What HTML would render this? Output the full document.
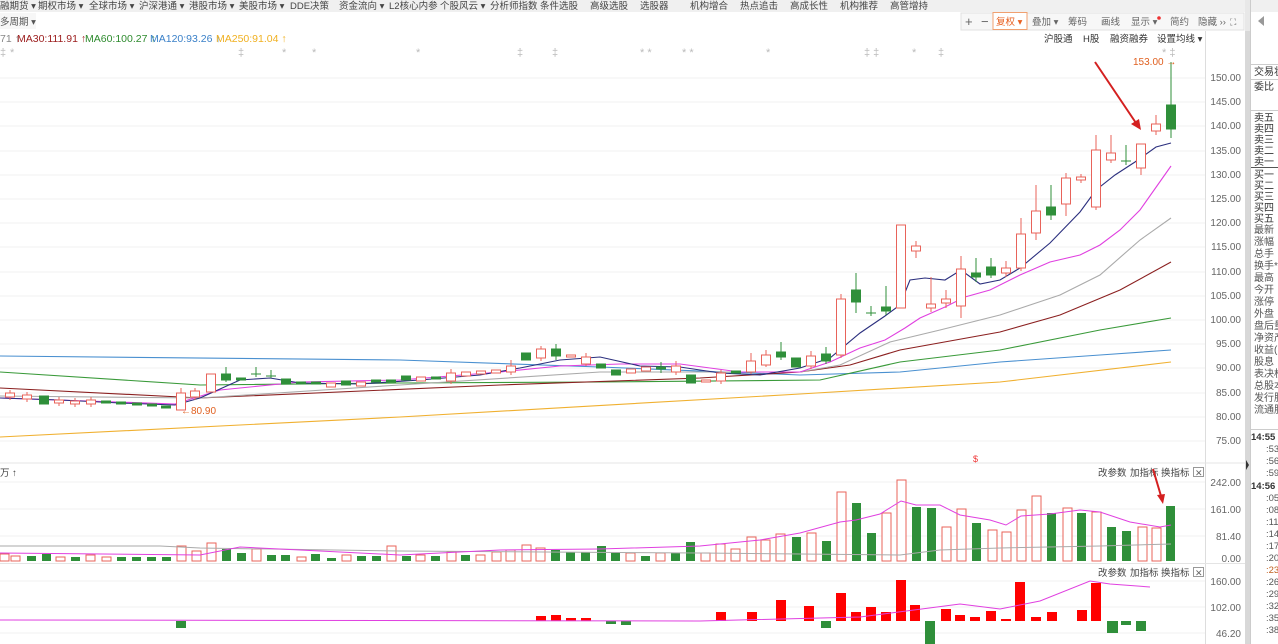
<!DOCTYPE html>
<html><head><meta charset="utf-8">
<style>
html,body{margin:0;padding:0;background:#fff;width:1278px;height:644px;overflow:hidden;font-family:"Liberation Sans","Noto Sans CJK SC",sans-serif;}
svg text{font-family:"Liberation Sans","Noto Sans CJK SC",sans-serif;}
</style></head><body>
<svg width="1278" height="644" viewBox="0 0 1278 644" xmlns="http://www.w3.org/2000/svg">
<rect x="0" y="0" width="1278" height="12" fill="#f0f0f0"/>
<g font-size="9.5" fill="#444">
<text x="0" y="9">融期货 ▾</text><text x="38" y="9">期权市场 ▾</text><text x="89" y="9">全球市场 ▾</text><text x="139" y="9">沪深港通 ▾</text><text x="189" y="9">港股市场 ▾</text><text x="239" y="9">美股市场 ▾</text><text x="290" y="9">DDE决策</text><text x="339" y="9">资金流向 ▾</text><text x="389" y="9">L2核心内参</text><text x="440" y="9">个股风云 ▾</text><text x="490" y="9">分析师指数</text><text x="540" y="9">条件选股</text><text x="590" y="9">高级选股</text><text x="640" y="9">选股器</text><text x="690" y="9">机构增合</text><text x="740" y="9">热点追击</text><text x="790" y="9">高成长性</text><text x="840" y="9">机构推荐</text><text x="890" y="9">高管增持</text>
</g>
<rect x="0" y="12" width="1245" height="19" fill="#fff"/>
<rect x="0" y="13" width="36" height="16" fill="#f7f7f7"/>
<text x="0" y="25" font-size="9.5" fill="#555">多周期 ▾</text>
<g font-size="9.5" fill="#666">
<rect x="961" y="13" width="283" height="17" fill="#f7f7f7" stroke="#e0e0e0"/>
<text x="965" y="26" font-size="13">+</text><text x="981" y="26" font-size="13">−</text>
<rect x="993" y="12.5" width="34" height="17" fill="#fff" stroke="#f0a070"/>
<text x="996" y="25" fill="#e86020">复权 ▾</text>
<text x="1032" y="25">叠加 ▾</text><text x="1068" y="25">筹码</text><text x="1101" y="25">画线</text><text x="1131" y="25">显示 ▾</text><circle cx="1159" cy="18" r="1.8" fill="#e33"/><text x="1170" y="25">简约</text><text x="1198" y="25">隐藏 ››</text><text x="1230" y="25" font-size="9">⛶</text>
</g>
<path d="M1264 16 L1258 21 L1264 26 Z" fill="#999"/>
<g font-size="10.5">
<text x="0" y="42" fill="#888">71 ↑</text>
<text x="17" y="42" fill="#9b1c1c">MA30:111.91 ↑</text>
<text x="85" y="42" fill="#2e8b2e">MA60:100.27 ↑</text>
<text x="150" y="42" fill="#3a80c8">MA120:93.26 ↑</text>
<text x="216" y="42" fill="#f0b020">MA250:91.04 ↑</text>
</g>
<g font-size="9.5" fill="#333"><text x="1044" y="42">沪股通</text><text x="1083" y="42">H股</text><text x="1110" y="42">融资融券</text><text x="1157" y="42">设置均线 ▾</text></g>
<g font-size="11" fill="#bbb"><text x="0" y="56">‡</text><text x="10" y="56">*</text><text x="238" y="56">‡</text><text x="282" y="56">*</text><text x="312" y="56">*</text><text x="416" y="56">*</text><text x="517" y="56">‡</text><text x="552" y="56">‡</text><text x="640" y="56">* *</text><text x="682" y="56">* *</text><text x="766" y="56">*</text><text x="864" y="56">‡ ‡</text><text x="912" y="56">*</text><text x="938" y="56">‡</text><text x="1162" y="56">* ‡</text></g>
<line x1="1205.5" y1="31" x2="1205.5" y2="644" stroke="#ddd"/>
<rect x="1245" y="31" width="5" height="613" fill="#d8d8d8"/>
<rect x="1245" y="0" width="5" height="31" fill="#e8e8e8"/>
<line x1="1250.5" y1="0" x2="1250.5" y2="644" stroke="#ccc"/>
<g stroke="#f0f0f0">
<line x1="0" y1="78" x2="1205" y2="78"/><line x1="0" y1="102" x2="1205" y2="102"/><line x1="0" y1="126" x2="1205" y2="126"/><line x1="0" y1="151" x2="1205" y2="151"/><line x1="0" y1="175" x2="1205" y2="175"/><line x1="0" y1="199" x2="1205" y2="199"/><line x1="0" y1="223" x2="1205" y2="223"/><line x1="0" y1="247" x2="1205" y2="247"/><line x1="0" y1="272" x2="1205" y2="272"/><line x1="0" y1="296" x2="1205" y2="296"/><line x1="0" y1="320" x2="1205" y2="320"/><line x1="0" y1="344" x2="1205" y2="344"/><line x1="0" y1="368" x2="1205" y2="368"/><line x1="0" y1="393" x2="1205" y2="393"/><line x1="0" y1="417" x2="1205" y2="417"/><line x1="0" y1="441" x2="1205" y2="441"/>
<line x1="0" y1="482" x2="1205" y2="482"/><line x1="0" y1="509" x2="1205" y2="509"/><line x1="0" y1="536" x2="1205" y2="536"/>
<line x1="0" y1="581" x2="1205" y2="581"/><line x1="0" y1="607" x2="1205" y2="607"/><line x1="0" y1="633" x2="1205" y2="633"/>
</g>
<line x1="0" y1="463" x2="1245" y2="463" stroke="#e4e4e4"/>
<line x1="0" y1="563.5" x2="1245" y2="563.5" stroke="#e4e4e4"/>
<g font-size="10" fill="#666" text-anchor="end">
<text x="1241" y="81">150.00</text><text x="1241" y="105">145.00</text><text x="1241" y="129">140.00</text><text x="1241" y="154">135.00</text><text x="1241" y="178">130.00</text><text x="1241" y="202">125.00</text><text x="1241" y="226">120.00</text><text x="1241" y="250">115.00</text><text x="1241" y="275">110.00</text><text x="1241" y="299">105.00</text><text x="1241" y="323">100.00</text><text x="1241" y="347">95.00</text><text x="1241" y="371">90.00</text><text x="1241" y="396">85.00</text><text x="1241" y="420">80.00</text><text x="1241" y="444">75.00</text>
<text x="1241" y="486">242.00</text><text x="1241" y="513">161.00</text><text x="1241" y="540">81.40</text><text x="1241" y="562">0.00</text>
<text x="1241" y="585">160.00</text><text x="1241" y="611">102.00</text><text x="1241" y="637">46.20</text>
</g>
<g fill="none" stroke-width="1.1">
<polyline stroke="#f0b030" points="0,437 400,417 800,394 1000,382 1171,362"/>
<polyline stroke="#4a90d0" points="0,356 400,360 600,367 800,375 900,372 1000,362 1100,355 1171,350"/>
<polyline stroke="#3a9a3a" points="0,372 200,385 400,383 600,382 820,380 900,362 1000,350 1100,330 1171,318"/>
<polyline stroke="#8b2020" points="0,388 200,398 500,385 700,378 800,372 850,365 900,350 1000,332 1060,315 1120,290 1171,262"/>
<polyline stroke="#aaa" points="0,396 200,398 400,385 600,372 800,372 840,365 890,342 940,330 1000,315 1060,295 1100,275 1140,240 1171,218"/>
<polyline stroke="#e040e0" points="0,398 175,404 220,390 300,382 400,380 500,372 560,366 620,364 680,364 740,372 800,372 830,362 860,348 885,340 905,328 920,318 945,307 965,297 990,290 1020,275 1050,262 1080,255 1100,245 1120,230 1140,210 1171,166"/>
<polyline stroke="#2b2f7e" points="0,398 60,400 120,403 175,405 200,398 240,380 270,378 300,383 360,384 420,380 480,375 520,368 560,360 600,357 640,366 680,367 720,373 760,375 800,368 830,358 860,333 885,316 900,305 910,280 925,278 945,280 961,270 980,284 1000,280 1020,268 1050,243 1080,212 1096,190 1115,175 1135,162 1156,147 1171,143"/>
</g>
<g stroke="#e8635a" fill="#fff">
<line x1="10" y1="390" x2="10" y2="400"/><rect x="5.5" y="393" width="9" height="4"/>
<line x1="27" y1="392" x2="27" y2="402"/><rect x="22.5" y="395" width="9" height="4"/>
<line x1="59" y1="397" x2="59" y2="406"/><rect x="54.5" y="400" width="9" height="3"/>
<line x1="75" y1="398" x2="75" y2="407"/><rect x="70.5" y="401" width="9" height="3"/>
<line x1="91" y1="397" x2="91" y2="407"/><rect x="86.5" y="400" width="9" height="4"/>
<line x1="181" y1="388" x2="181" y2="410"/><rect x="176.5" y="393" width="9" height="17"/>
<line x1="195" y1="388" x2="195" y2="400"/><rect x="190.5" y="391" width="9" height="6"/>
<rect x="206.5" y="374" width="9" height="18"/>
<rect x="326.5" y="383" width="9" height="4"/><rect x="356.5" y="382" width="9" height="4"/>
<rect x="416.5" y="377" width="9" height="4"/>
<line x1="451" y1="369" x2="451" y2="384"/><rect x="446.5" y="373" width="9" height="8"/>
<rect x="461.5" y="372" width="9" height="4"/><rect x="476.5" y="371" width="9" height="3"/><rect x="491.5" y="370" width="9" height="3"/>
<line x1="511" y1="360" x2="511" y2="375"/><rect x="506.5" y="366" width="9" height="6"/>
<line x1="541" y1="346" x2="541" y2="361"/><rect x="536.5" y="349" width="9" height="9"/>
<rect x="566.5" y="355" width="9" height="2"/>
<line x1="586" y1="353" x2="586" y2="366"/><rect x="581.5" y="357" width="9" height="7"/>
<rect x="626.5" y="369" width="9" height="4"/><rect x="641.5" y="367" width="9" height="4"/>
<line x1="676" y1="361" x2="676" y2="375"/><rect x="671.5" y="366" width="9" height="6"/>
<rect x="701.5" y="380" width="9" height="2"/>
<line x1="721" y1="370" x2="721" y2="384"/><rect x="716.5" y="373" width="9" height="8"/>
<line x1="751" y1="353" x2="751" y2="374"/><rect x="746.5" y="361" width="9" height="11"/>
<line x1="766" y1="350" x2="766" y2="367"/><rect x="761.5" y="355" width="9" height="10"/>
<line x1="811" y1="351" x2="811" y2="369"/><rect x="806.5" y="356" width="9" height="10"/>
<line x1="841" y1="294" x2="841" y2="358"/><rect x="836.5" y="299" width="9" height="56"/>
<rect x="896.5" y="225" width="9" height="83"/>
<line x1="916" y1="241" x2="916" y2="258"/><rect x="911.5" y="246" width="9" height="5"/>
<line x1="931" y1="277" x2="931" y2="312"/><rect x="926.5" y="304" width="9" height="4"/>
<line x1="946" y1="290" x2="946" y2="308"/><rect x="941.5" y="299" width="9" height="4"/>
<line x1="961" y1="256" x2="961" y2="318"/><rect x="956.5" y="269" width="9" height="37"/>
<line x1="1006" y1="261" x2="1006" y2="277"/><rect x="1001.5" y="268" width="9" height="5"/>
<line x1="1021" y1="218" x2="1021" y2="271"/><rect x="1016.5" y="234" width="9" height="34"/>
<line x1="1036" y1="185" x2="1036" y2="240"/><rect x="1031.5" y="211" width="9" height="22"/>
<line x1="1066" y1="173" x2="1066" y2="216"/><rect x="1061.5" y="178" width="9" height="26"/>
<line x1="1081" y1="174" x2="1081" y2="183"/><rect x="1076.5" y="177" width="9" height="3"/>
<line x1="1096" y1="135" x2="1096" y2="210"/><rect x="1091.5" y="150" width="9" height="57"/>
<line x1="1111" y1="135" x2="1111" y2="163"/><rect x="1106.5" y="153" width="9" height="7"/>
<line x1="1141" y1="144" x2="1141" y2="175"/><rect x="1136.5" y="144" width="9" height="24"/>
<line x1="1156" y1="115" x2="1156" y2="135"/><rect x="1151.5" y="124" width="9" height="7"/>
</g>
<g stroke="#2f8f3a" fill="#2f8f3a">
<rect x="39.5" y="396" width="9" height="8"/><rect x="101.5" y="401" width="9" height="2"/><rect x="116.5" y="402" width="9" height="2"/><rect x="132.5" y="403" width="9" height="2"/><rect x="147.5" y="404" width="9" height="2"/><rect x="161.5" y="406" width="9" height="2"/>
<line x1="226" y1="367" x2="226" y2="382"/><rect x="221.5" y="374" width="9" height="6"/><rect x="236.5" y="378" width="9" height="2"/>
<line x1="256" y1="367" x2="256" y2="377"/><line x1="251" y1="374" x2="261" y2="374"/><line x1="271" y1="370" x2="271" y2="378"/><line x1="266" y1="376" x2="276" y2="376"/>
<rect x="281.5" y="379" width="9" height="5"/><rect x="296.5" y="382" width="9" height="2"/><rect x="311.5" y="382" width="9" height="2"/><rect x="341.5" y="381" width="9" height="4"/><rect x="371.5" y="380" width="9" height="2"/><rect x="386.5" y="380" width="9" height="2"/><rect x="401.5" y="376" width="9" height="4"/><rect x="431.5" y="377" width="9" height="2"/>
<rect x="521.5" y="353" width="9" height="7"/><line x1="556" y1="344" x2="556" y2="360"/><rect x="551.5" y="349" width="9" height="7"/>
<rect x="596.5" y="364" width="9" height="4"/><rect x="611.5" y="370" width="9" height="5"/><line x1="661" y1="362" x2="661" y2="373"/><rect x="656.5" y="367" width="9" height="2"/>
<rect x="686.5" y="375" width="9" height="8"/><rect x="731.5" y="371" width="9" height="2"/>
<line x1="781" y1="342" x2="781" y2="360"/><rect x="776.5" y="352" width="9" height="5"/><rect x="791.5" y="358" width="9" height="9"/><line x1="826" y1="347" x2="826" y2="364"/><rect x="821.5" y="354" width="9" height="7"/>
<line x1="856" y1="273" x2="856" y2="313"/><rect x="851.5" y="290" width="9" height="12"/>
<line x1="871" y1="306" x2="871" y2="316"/><line x1="866" y1="313" x2="876" y2="313"/>
<line x1="886" y1="286" x2="886" y2="315"/><rect x="881.5" y="307" width="9" height="4"/>
<line x1="976" y1="258" x2="976" y2="282"/><rect x="971.5" y="273" width="9" height="4"/>
<line x1="991" y1="258" x2="991" y2="278"/><rect x="986.5" y="267" width="9" height="8"/>
<line x1="1051" y1="185" x2="1051" y2="220"/><rect x="1046.5" y="207" width="9" height="8"/>
<line x1="1126" y1="145" x2="1126" y2="165"/><line x1="1121" y1="161" x2="1131" y2="161"/>
<line x1="1171" y1="62" x2="1171" y2="138"/><rect x="1166.5" y="105" width="9" height="24"/>
</g>
<g font-size="10" fill="#e06020"><text x="181" y="414">←80.90</text><text x="1133" y="65">153.00 →</text></g>
<g stroke="#e8635a" fill="#fff">
<rect x="0" y="554" width="9" height="7"/><rect x="11" y="556" width="9" height="5"/><rect x="56" y="557" width="9" height="4"/><rect x="86" y="555" width="9" height="6"/><rect x="102" y="557" width="9" height="4"/><rect x="177" y="546" width="9" height="15"/><rect x="192" y="551" width="9" height="10"/><rect x="207" y="543" width="9" height="18"/><rect x="252" y="549" width="9" height="12"/><rect x="297" y="557" width="9" height="4"/><rect x="342" y="555" width="9" height="6"/><rect x="387" y="546" width="9" height="15"/><rect x="416" y="555" width="9" height="6"/><rect x="447" y="552" width="9" height="9"/><rect x="476" y="555" width="9" height="6"/><rect x="492" y="552" width="9" height="9"/><rect x="506" y="550" width="9" height="11"/><rect x="522" y="545" width="9" height="16"/><rect x="536" y="548" width="9" height="13"/><rect x="626" y="553" width="9" height="8"/><rect x="656" y="553" width="9" height="8"/><rect x="701" y="553" width="9" height="8"/><rect x="716" y="544" width="9" height="17"/><rect x="731" y="549" width="9" height="12"/><rect x="747" y="537" width="9" height="24"/><rect x="761" y="540" width="9" height="21"/><rect x="776" y="534" width="9" height="27"/><rect x="807" y="533" width="9" height="28"/><rect x="837" y="492" width="9" height="69"/><rect x="882" y="513" width="9" height="48"/><rect x="897" y="480" width="9" height="81"/><rect x="942" y="527" width="9" height="34"/><rect x="957" y="509" width="9" height="52"/><rect x="988" y="530" width="9" height="31"/><rect x="1002" y="532" width="9" height="29"/><rect x="1017" y="510" width="9" height="51"/><rect x="1032" y="496" width="9" height="65"/><rect x="1063" y="508" width="9" height="53"/><rect x="1092" y="512" width="9" height="49"/><rect x="1138" y="527" width="9" height="34"/><rect x="1152" y="528" width="9" height="33"/>
</g>
<g fill="#2f8f3a">
<rect x="27" y="556" width="9" height="5"/><rect x="42" y="554" width="9" height="7"/><rect x="71" y="557" width="9" height="4"/><rect x="117" y="557" width="9" height="4"/><rect x="132" y="557" width="9" height="4"/><rect x="147" y="557" width="9" height="4"/><rect x="162" y="557" width="9" height="4"/><rect x="222" y="549" width="9" height="12"/><rect x="237" y="553" width="9" height="8"/><rect x="267" y="555" width="9" height="6"/><rect x="281" y="555" width="9" height="6"/><rect x="311" y="554" width="9" height="7"/><rect x="327" y="558" width="9" height="3"/><rect x="357" y="556" width="9" height="5"/><rect x="372" y="556" width="9" height="5"/><rect x="402" y="556" width="9" height="5"/><rect x="431" y="556" width="9" height="5"/><rect x="461" y="555" width="9" height="6"/><rect x="551" y="550" width="9" height="11"/><rect x="566" y="552" width="9" height="9"/><rect x="581" y="552" width="9" height="9"/><rect x="597" y="546" width="9" height="15"/><rect x="611" y="553" width="9" height="8"/><rect x="641" y="556" width="9" height="5"/><rect x="671" y="553" width="9" height="8"/><rect x="686" y="542" width="9" height="19"/><rect x="792" y="537" width="9" height="24"/><rect x="822" y="541" width="9" height="20"/><rect x="852" y="503" width="9" height="58"/><rect x="867" y="533" width="9" height="28"/><rect x="912" y="507" width="9" height="54"/><rect x="927" y="508" width="9" height="53"/><rect x="972" y="523" width="9" height="38"/><rect x="1047" y="513" width="9" height="48"/><rect x="1077" y="513" width="9" height="48"/><rect x="1107" y="527" width="9" height="34"/><rect x="1122" y="531" width="9" height="30"/><rect x="1166" y="506" width="9" height="55"/>
</g>
<g fill="none" stroke-width="1">
<polyline stroke="#aaa" points="0,546 160,546 200,548 400,551 700,553 900,555 940,550 1000,548 1100,546 1171,544"/>
<polyline stroke="#e040e0" points="0,553 200,555 240,547 300,550 400,555 500,550 600,549 700,546 760,540 800,533 840,522 856,520 880,514 901,501 916,505 940,505 960,515 990,520 1006,525 1021,516 1050,514 1080,510 1100,512 1130,522 1160,527 1171,525"/>
</g>
<g fill="#f00">
<rect x="716" y="612" width="10" height="9"/><rect x="747" y="612" width="10" height="9"/><rect x="776" y="600" width="10" height="21"/><rect x="804" y="606" width="10" height="15"/><rect x="836" y="593" width="10" height="28"/><rect x="851" y="612" width="10" height="9"/><rect x="866" y="607" width="10" height="14"/><rect x="881" y="612" width="10" height="9"/><rect x="896" y="580" width="10" height="41"/><rect x="910" y="605" width="10" height="16"/><rect x="941" y="609" width="10" height="12"/><rect x="955" y="615" width="10" height="6"/><rect x="970" y="617" width="10" height="4"/><rect x="986" y="611" width="10" height="10"/><rect x="1001" y="619" width="10" height="2"/><rect x="1015" y="582" width="10" height="39"/><rect x="1031" y="617" width="10" height="4"/><rect x="1047" y="612" width="10" height="9"/><rect x="1077" y="610" width="10" height="11"/><rect x="1091" y="583" width="10" height="38"/>
<rect x="536" y="616" width="10" height="5"/><rect x="551" y="615" width="10" height="6"/><rect x="566" y="618" width="10" height="3"/><rect x="581" y="618" width="10" height="3"/>
</g>
<g fill="#2f8f3a">
<rect x="176" y="621" width="10" height="7"/><rect x="606" y="621" width="10" height="3"/><rect x="621" y="621" width="10" height="4"/><rect x="821" y="621" width="10" height="7"/><rect x="925" y="621" width="10" height="23"/><rect x="1107" y="621" width="11" height="12"/><rect x="1121" y="621" width="10" height="4"/><rect x="1136" y="621" width="10" height="10"/>
</g>
<polyline fill="none" stroke="#e040e0" points="0,620 700,621 860,617 960,604 1000,609 1040,601 1090,581 1110,584 1150,587"/>
<g font-size="9.5" fill="#444">
<text x="0" y="476">万 ↑</text>
<text x="1098" y="476">改参数</text><text x="1130" y="476">加指标</text><text x="1161" y="476">换指标</text>
<text x="1098" y="576">改参数</text><text x="1130" y="576">加指标</text><text x="1161" y="576">换指标</text>
</g>
<rect x="1193.5" y="467.5" width="10" height="9" fill="#fff" stroke="#999"/><text x="1195" y="476" font-size="9" fill="#666">✕</text>
<rect x="1193.5" y="567.5" width="10" height="9" fill="#fff" stroke="#999"/><text x="1195" y="576" font-size="9" fill="#666">✕</text>
<text x="973" y="462" font-size="9" fill="#e33">$</text>
<g stroke="#d42020" stroke-width="2" fill="#d42020">
<line x1="1095" y1="62" x2="1136" y2="123"/><path d="M1141 130 L1131 124 L1139 119 Z" stroke="none"/>
<line x1="1153" y1="469" x2="1161" y2="496"/><path d="M1163 504 L1157 495 L1165 494 Z" stroke="none"/>
</g>
<g font-size="10" fill="#333">
<line x1="1251" y1="64.5" x2="1278" y2="64.5" stroke="#ccc"/>
<text x="1254" y="75">交易状</text><line x1="1251" y1="79.5" x2="1278" y2="79.5" stroke="#ccc"/>
<text x="1254" y="90">委比</text><line x1="1251" y1="110.5" x2="1278" y2="110.5" stroke="#ccc"/>
<text x="1254" y="121">卖五</text><text x="1254" y="132">卖四</text><text x="1254" y="143">卖三</text><text x="1254" y="154">卖二</text><text x="1254" y="165">卖一</text>
<line x1="1251" y1="167.5" x2="1278" y2="167.5" stroke="#555"/>
<text x="1254" y="178">买一</text><text x="1254" y="189">买二</text><text x="1254" y="200">买三</text><text x="1254" y="211">买四</text><text x="1254" y="222">买五</text>
</g>
<g font-size="10" fill="#555">
<text x="1254" y="233">最新</text><text x="1254" y="245">涨幅</text><text x="1254" y="257">总手</text><text x="1254" y="269">换手*</text><text x="1254" y="281">最高</text><text x="1254" y="293">今开</text><text x="1254" y="305">涨停</text><text x="1254" y="317">外盘</text><text x="1254" y="329">盘后量</text><text x="1254" y="341">净资产</text><text x="1254" y="353">收益(</text><text x="1254" y="365">股息</text><text x="1254" y="377">表决权</text><text x="1254" y="389">总股本</text><text x="1254" y="401">发行股</text><text x="1254" y="413">流通股</text>
</g>
<line x1="1251" y1="429.5" x2="1278" y2="429.5" stroke="#ccc"/>
<g font-size="9.5" fill="#555">
<text x="1251" y="440" font-weight="bold" fill="#333">14:55</text>
<text x="1266" y="452">:53</text><text x="1266" y="464">:56</text><text x="1266" y="476">:59</text>
<text x="1251" y="489" font-weight="bold" fill="#333">14:56</text>
<text x="1266" y="501">:05</text><text x="1266" y="513">:08</text><text x="1266" y="525">:11</text><text x="1266" y="537">:14</text><text x="1266" y="549">:17</text><text x="1266" y="561">:20</text><text x="1266" y="573" fill="#c06020">:23</text><text x="1266" y="585">:26</text><text x="1266" y="597">:29</text><text x="1266" y="609">:32</text><text x="1266" y="621">:35</text><text x="1266" y="633">:38</text>
</g>
<path d="M1246 460 L1249 465 L1246 470 Z" fill="#333"/>
</svg>
</body></html>
